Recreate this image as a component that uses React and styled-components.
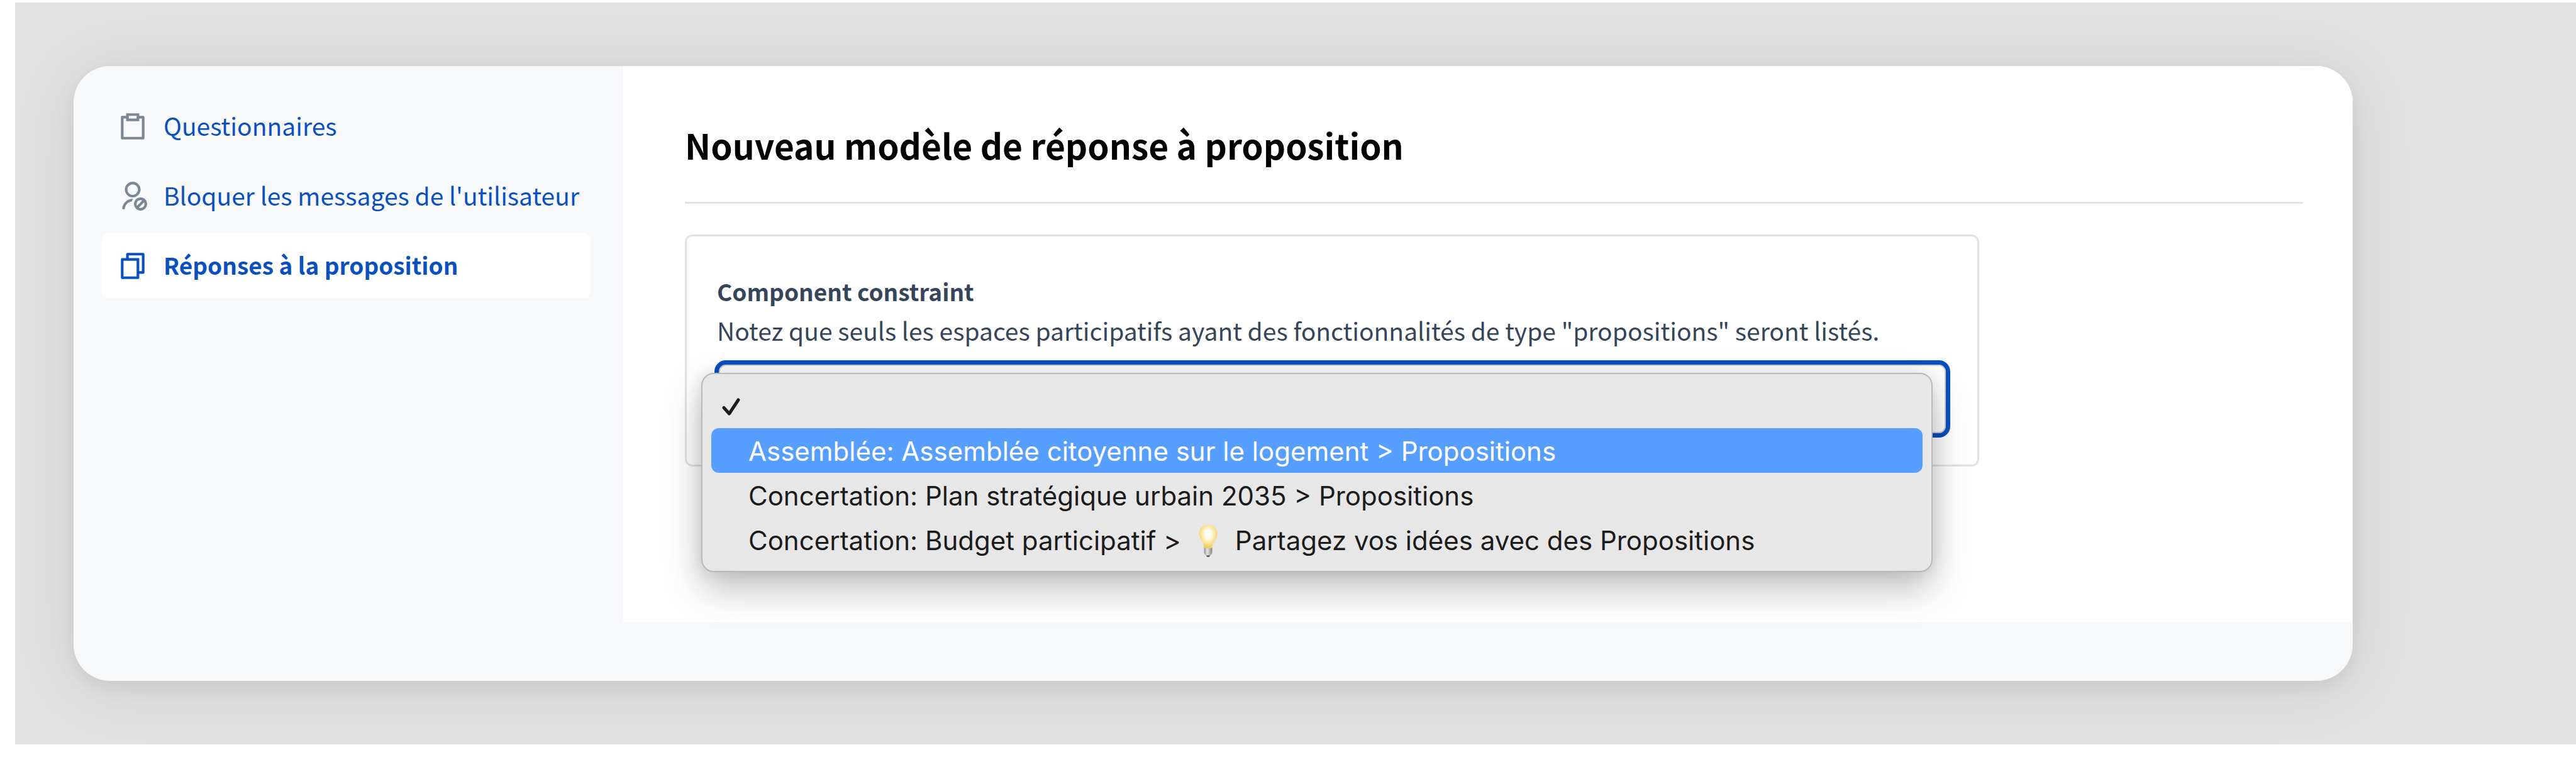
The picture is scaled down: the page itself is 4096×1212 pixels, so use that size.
import React from "react";
import styled, { createGlobalStyle } from "styled-components";
import {
  RiClipboardLine,
  RiUserForbidLine,
  RiFileCopyLine,
} from "react-icons/ri";

const COLORS = {
  primary: "#0b50bf",
  grey: "#7b8794",
  text: "#35455a",
  stage: "#e1e1e1",
  line: "#e2e2e2",
  background: "#f7f8fa",
};

const MENU = [
  { label: "Questionnaires", Icon: RiClipboardLine },
  { label: "Bloquer les messages de l'utilisateur", Icon: RiUserForbidLine },
  { label: "Réponses à la proposition", Icon: RiFileCopyLine, active: true },
];

function CheckMark() {
  return (
    <Check viewBox="0 0 30 30" aria-hidden="true">
      <path d="M4 16.5 L12.5 26 L27 4" />
    </Check>
  );
}

function LightBulb() {
  return (
    <Bulb viewBox="0 0 30 52" role="img" aria-label="idée">
      <defs>
        <radialGradient id="glass" cx="50%" cy="40%" r="56%">
          <stop offset="0" stopColor="#ffffff" />
          <stop offset="0.35" stopColor="#fffbea" />
          <stop offset="0.65" stopColor="#fde79c" />
          <stop offset="1" stopColor="#f0ca66" />
        </radialGradient>
        <linearGradient id="metal">
          <stop offset="0" stopColor="#8d8d8d" />
          <stop offset="0.4" stopColor="#e4e4e4" />
          <stop offset="1" stopColor="#858585" />
        </linearGradient>
      </defs>
      <path
        d="M8.500 37h13v7.500q0 2.500-2.500 4l-1.500 2.500h-5l-1.500-2.500q-2.500-1.500-2.500-4z"
        fill="url(#metal)"
      />
      <path d="M12 49.500h6l-1.200 2.200h-3.600z" fill="#444" />
      <path
        d="M15 .5C7 .5.5 6.800.5 15c0 8.500 7.500 12.500 7.900 20.500.1 1.500.8 2.500 2.400 2.500h8.400c1.600 0 2.300-1 2.400-2.500C22 27.500 29.500 23.500 29.500 15 29.500 6.800 23 .5 15 .5z"
        fill="url(#glass)"
      />
    </Bulb>
  );
}

function Sidebar() {
  return (
    <SidebarNav>
      {MENU.map(({ label, Icon, active }) => (
        <MenuLink
          key={label}
          href="#"
          $active={active}
          aria-current={active ? "page" : undefined}
        >
          <Icon aria-hidden="true" />
          <MenuText>{label}</MenuText>
        </MenuLink>
      ))}
    </SidebarNav>
  );
}

function ComponentSelect() {
  return (
    <SelectHolder>
      <Select id="component" defaultValue="" aria-describedby="component-help">
        <option value=""></option>
      </Select>
      <Options role="listbox" aria-label="Component constraint">
        <Option role="option" aria-selected="true" aria-label="Aucun">
          <CheckMark />
        </Option>
        <Option role="option" aria-selected="false" $highlighted>
          Assemblée: Assemblée citoyenne sur le logement &gt; Propositions
        </Option>
        <Option role="option" aria-selected="false">
          Concertation: Plan stratégique urbain 2035 &gt; Propositions
        </Option>
        <Option role="option" aria-selected="false">
          Concertation: Budget participatif &gt;
          <LightBulb />
          Partagez vos idées avec des Propositions
        </Option>
      </Options>
    </SelectHolder>
  );
}

function App() {
  return (
    <>
      <GlobalStyle />
      <Page>
        <Stage>
          <Panel>
            <Sidebar />
            <Main>
              <Title>Nouveau modèle de réponse à proposition</Title>
              <FormCard>
                <Label htmlFor="component">Component constraint</Label>
                <Help id="component-help">
                  Notez que seuls les espaces participatifs ayant des
                  fonctionnalités de type "propositions" seront listés.
                </Help>
                <ComponentSelect />
              </FormCard>
            </Main>
          </Panel>
        </Stage>
      </Page>
    </>
  );
}

export default App;

const GlobalStyle = createGlobalStyle`
  * {
    box-sizing: border-box;
  }

  body {
    margin: 0;
    background: #fff;
    font-family: "Noto Sans CJK SC", "Noto Sans", sans-serif;
    font-size: 39px;
    line-height: 62px;
    color: ${COLORS.text};
  }
`;

const Page = styled.div`
  padding: 4px 0 28px 24px;
`;

const Stage = styled.div`
  padding: 101px 355px 101px 93px;
  background: ${COLORS.stage};
  overflow: hidden;
`;

const Panel = styled.div`
  display: grid;
  grid-template-columns: 874px 1fr;
  align-items: start;
  padding-bottom: 94px;
  border-radius: 58px;
  overflow: hidden;
  background: ${COLORS.background};
  box-shadow: 0 10px 30px rgba(0, 0, 0, 0.07), 0 10px 110px rgba(0, 0, 0, 0.07);
`;

const SidebarNav = styled.nav`
  display: flex;
  flex-direction: column;
  gap: 7px;
  padding: 44px 52px 0 45px;
`;

const MenuLink = styled.a`
  display: flex;
  align-items: center;
  gap: 24px;
  height: 104px;
  padding: 0 24px;
  border-radius: 10px;
  background: ${(props) => (props.$active ? "#fff" : "transparent")};
  color: ${COLORS.primary};
  font-size: ${(props) => (props.$active ? "37px" : "39px")};
  font-weight: ${(props) => (props.$active ? 700 : 400)};
  text-decoration: none;
  white-space: nowrap;

  svg {
    width: 50px;
    height: 50px;
    flex: none;
    color: ${(props) => (props.$active ? COLORS.primary : COLORS.grey)};
  }
`;

const MenuText = styled.span`
  padding-bottom: 4px;
`;

const Main = styled.main`
  padding: 85px 79px 247px 98px;
  background: #fff;
`;

const Title = styled.h1`
  margin: 0 0 49px;
  padding-bottom: 51px;
  border-bottom: 3px solid ${COLORS.line};
  color: #000;
  font-size: 55px;
  font-weight: 700;
  line-height: 80px;
`;

const FormCard = styled.form`
  width: 80%;
  padding: 56px 43px 43px 44px;
  border: 3px solid ${COLORS.line};
  border-radius: 12px;
`;

const Label = styled.label`
  display: block;
  padding-left: 4px;
  font-size: 37px;
  font-weight: 700;
`;

const Help = styled.p`
  margin: 0 0 17px;
  padding-left: 4px;
`;

const SelectHolder = styled.div`
  position: relative;
`;

const Select = styled.select`
  display: block;
  width: 100%;
  height: 123px;
  appearance: none;
  border: 7px solid ${COLORS.primary};
  border-radius: 18px;
  outline: none;
  background: #fff;
  box-shadow: inset 0 0 0 2px #cfcfcf;
  font: inherit;
`;

const Options = styled.ul`
  position: absolute;
  top: 20px;
  left: -21px;
  right: 28px;
  margin: 0;
  padding: 15px 14px 14px;
  list-style: none;
  border: 2px solid #b9b9b9;
  border-radius: 20px;
  background: #e7e7e7;
  color: #1c1c1c;
  font-family: Inter, sans-serif;
  font-size: 42px;
  box-shadow: 0 26px 60px rgba(0, 0, 0, 0.26), 0 0 24px rgba(0, 0, 0, 0.1);
`;

const Option = styled.li`
  position: relative;
  display: flex;
  align-items: center;
  height: 71px;
  padding: 2px 0 0 59px;
  border-radius: 12px;
  background: ${(props) => (props.$highlighted ? "#569eff" : "transparent")};
  color: ${(props) => (props.$highlighted ? "#fff" : "inherit")};
  white-space: nowrap;
`;

const Check = styled.svg`
  position: absolute;
  left: 16px;
  width: 30px;
  height: 30px;
  fill: none;
  stroke: #1c1c1c;
  stroke-width: 5;
  stroke-linecap: round;
  stroke-linejoin: round;
`;

const Bulb = styled.svg`
  width: 30px;
  height: 52px;
  margin: 0 28px;
`;
